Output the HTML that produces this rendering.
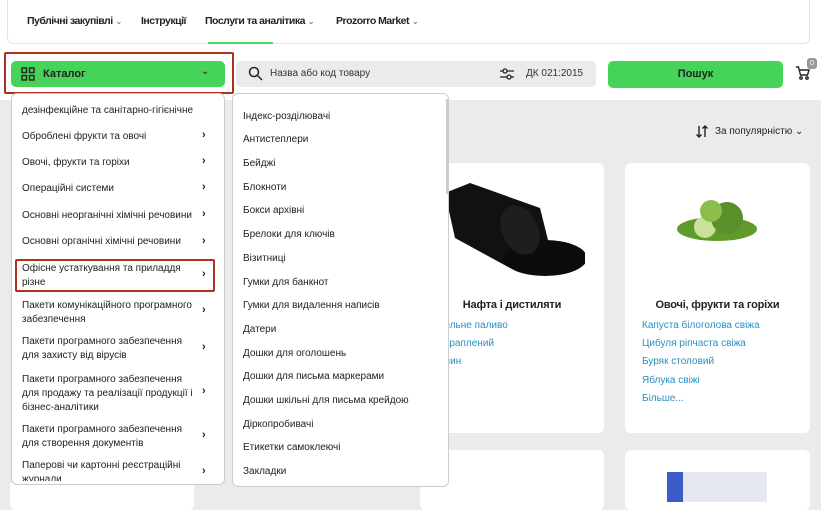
<!DOCTYPE html><html><head><meta charset="utf-8"><style>
*{box-sizing:border-box;margin:0;padding:0}
body{width:821px;height:497px;overflow:hidden;background:#ebebeb;font-family:"Liberation Sans",sans-serif;position:relative;color:#222}
.top{position:absolute;left:0;top:0;width:821px;height:100px;background:#fff}
.nav{position:absolute;left:7px;top:-2px;width:803px;height:46px;border:1px solid #e3e3e3;border-radius:0 0 6px 6px;background:#fff}
.nav span{position:absolute;top:16px;font-size:10.5px;font-weight:bold;letter-spacing:-.5px}
.nav i{font-style:normal;font-weight:normal;color:#666;font-size:9px}
.ul{position:absolute;left:208px;top:42px;width:65px;height:2px;background:#4cd964}
.red{position:absolute;border:2px solid #b03020;border-radius:2px}
.cat{position:absolute;left:11px;top:61px;width:214px;height:26px;background:#46d35a;border-radius:5px}
.search{position:absolute;left:236px;top:61px;width:360px;height:26px;background:#ebebeb;border-radius:5px;font-size:10px;color:#333}
.btn{position:absolute;left:608px;top:61px;width:175px;height:27px;background:#46d35a;border-radius:5px;font-size:11px;font-weight:bold;text-align:center;line-height:27px}
.dd{position:absolute;background:#fff;border:1px solid #ccc;border-radius:6px;overflow:hidden}
.l div{position:absolute;left:10px;font-size:10px;color:#222;line-height:14px;width:175px}
.l b{position:absolute;left:190px;font-size:11px}
.r div{position:absolute;left:10px;font-size:10px;color:#222}
.card{position:absolute;background:#fff;border-radius:6px}
.card h4{position:absolute;font-size:11px;text-align:center;width:100%;letter-spacing:-.2px}
.card p{position:absolute;font-size:10px;color:#2a8fc0}
</style></head><body>
<div class="top"></div>
<div class="nav">
<span style="left:19px">Публічні закупівлі <i>⌄</i></span>
<span style="left:133px">Інструкції</span>
<span style="left:197px">Послуги та аналітика <i>⌄</i></span>
<span style="left:328px">Prozorro Market <i>⌄</i></span>
</div>
<div class="ul"></div>
<div class="red" style="left:4px;top:52px;width:230px;height:42px"></div>
<div class="cat">
<svg style="position:absolute;left:10px;top:6px" width="14" height="14" viewBox="0 0 14 14" fill="none" stroke="#222" stroke-width="1.4"><rect x="1" y="1" width="4.5" height="4.5"/><rect x="8.5" y="1" width="4.5" height="4.5"/><rect x="1" y="8.5" width="4.5" height="4.5"/><rect x="8.5" y="8.5" width="4.5" height="4.5"/></svg>
<span style="position:absolute;left:32px;top:7px;font-size:11px;font-weight:bold">Каталог</span>
<span style="position:absolute;left:190px;top:5px;font-size:10px">⌄</span>
</div>
<div class="search">
<svg style="position:absolute;left:12px;top:5px" width="15" height="15" viewBox="0 0 15 15" fill="none" stroke="#222" stroke-width="1.5"><circle cx="6" cy="6" r="4.5"/><path d="M9.5 9.5L14 14"/></svg>
<span style="position:absolute;left:34px;top:7px">Назва або код товару</span>
<svg style="position:absolute;left:264px;top:6px" width="14" height="14" viewBox="0 0 14 14" fill="none" stroke="#222" stroke-width="1.3"><path d="M0 4h14M0 10h14"/><circle cx="5" cy="4" r="2" fill="#ebebeb"/><circle cx="9" cy="10" r="2" fill="#ebebeb"/></svg>
<span style="position:absolute;left:290px;top:7px">ДК 021:2015</span>
</div>
<div class="btn">Пошук</div>
<svg style="position:absolute;left:795px;top:65px" width="16" height="16" viewBox="0 0 16 16" fill="none" stroke="#222" stroke-width="1.4"><path d="M1 2h2.5l2 8h7l1.5-5H5"/><circle cx="6" cy="13" r="1.2"/><circle cx="12" cy="13" r="1.2"/></svg>
<div style="position:absolute;left:807px;top:58px;width:10px;height:11px;background:#999;border-radius:3px;color:#fff;font-size:7px;text-align:center;line-height:11px">0</div>

<svg style="position:absolute;left:696px;top:125px" width="12" height="13" viewBox="0 0 12 13" fill="none" stroke="#222" stroke-width="1.4"><path d="M3 1v11M0.5 9.5L3 12l2.5-2.5M9 12V1M6.5 3.5L9 1l2.5 2.5"/></svg>
<span style="position:absolute;left:715px;top:126px;font-size:10px">За популярністю ⌄</span>

<div class="card" style="left:420px;top:163px;width:184px;height:270px">
<svg style="position:absolute;left:25px;top:15px" width="140" height="110" viewBox="0 0 140 110"><path d="M0 15 L25 5 L95 30 L105 70 L65 90 L10 60Z" fill="#111"/><ellipse cx="100" cy="80" rx="42" ry="18" fill="#0c0c0c"/><ellipse cx="75" cy="52" rx="18" ry="26" fill="#1e1e1e" transform="rotate(-25 75 52)"/></svg>
<h4 style="top:136px">Нафта і дистиляти</h4>
<p style="left:20px;top:157px">зельне паливо</p>
<p style="left:20px;top:175px">скраплений</p>
<p style="left:20px;top:193px">нзин</p>
</div>
<div class="card" style="left:625px;top:163px;width:185px;height:270px">
<svg style="position:absolute;left:50px;top:30px" width="85" height="55" viewBox="0 0 85 55"><ellipse cx="42" cy="36" rx="40" ry="12" fill="#5f9a2a"/><circle cx="30" cy="34" r="11" fill="#c9e19a"/><circle cx="52" cy="25" r="16" fill="#5b8f2a"/><circle cx="36" cy="18" r="11" fill="#8bbd4a"/></svg>
<h4 style="top:136px">Овочі, фрукти та горіхи</h4>
<p style="left:17px;top:157px">Капуста білоголова свіжа</p>
<p style="left:17px;top:175px">Цибуля ріпчаста свіжа</p>
<p style="left:17px;top:193px">Буряк столовий</p>
<p style="left:17px;top:212px">Яблука свіжі</p>
<p style="left:17px;top:230px">Більше...</p>
</div>
<div class="card" style="left:625px;top:450px;width:185px;height:60px"><div style="position:absolute;left:42px;top:22px;width:100px;height:30px;background:#e5e8ee"><div style="width:16px;height:30px;background:#3a5bc8"></div></div></div>
<div class="card" style="left:420px;top:450px;width:184px;height:60px"></div>
<div class="card" style="left:10px;top:480px;width:184px;height:30px"></div>

<div class="dd l" style="left:11px;top:93px;width:214px;height:392px">
<div style="top:10px">дезінфекційне та санітарно-гігієнічне</div>
<div style="top:36px">Оброблені фрукти та овочі</div><b style="top:35px">›</b>
<div style="top:62px">Овочі, фрукти та горіхи</div><b style="top:61px">›</b>
<div style="top:88px">Операційні системи</div><b style="top:87px">›</b>
<div style="top:115px">Основні неорганічні хімічні речовини</div><b style="top:114px">›</b>
<div style="top:141px">Основні органічні хімічні речовини</div><b style="top:141px">›</b>
<div style="top:168px">Офісне устаткування та приладдя різне</div><b style="top:174px">›</b>
<div style="top:205px">Пакети комунікаційного програмного забезпечення</div><b style="top:210px">›</b>
<div style="top:241px">Пакети програмного забезпечення для захисту від вірусів</div><b style="top:247px">›</b>
<div style="top:279px">Пакети програмного забезпечення для продажу та реалізації продукції і бізнес-аналітики</div><b style="top:291px">›</b>
<div style="top:329px">Пакети програмного забезпечення для створення документів</div><b style="top:335px">›</b>
<div style="top:365px;height:22px;overflow:hidden">Паперові чи картонні реєстраційні журнали</div><b style="top:371px">›</b>
<span style="position:absolute;left:212px;top:40px;width:2px;height:80px;background:#ccc"></span>
</div>
<div class="red" style="left:15px;top:259px;width:200px;height:33px"></div>

<div class="dd r" style="left:232px;top:93px;width:217px;height:394px">
<div style="top:17px">Індекс-розділювачі</div>
<div style="top:40px">Антистеплери</div>
<div style="top:64px">Бейджі</div>
<div style="top:88px">Блокноти</div>
<div style="top:111px">Бокси архівні</div>
<div style="top:135px">Брелоки для ключів</div>
<div style="top:159px">Візитниці</div>
<div style="top:183px">Гумки для банкнот</div>
<div style="top:206px">Гумки для видалення написів</div>
<div style="top:230px">Датери</div>
<div style="top:254px">Дошки для оголошень</div>
<div style="top:277px">Дошки для письма маркерами</div>
<div style="top:301px">Дошки шкільні для письма крейдою</div>
<div style="top:325px">Діркопробивачі</div>
<div style="top:348px">Етикетки самоклеючі</div>
<div style="top:372px">Закладки</div>
<span style="position:absolute;left:213px;top:5px;width:2px;height:95px;background:#ccc"></span>
</div>
</body></html>
